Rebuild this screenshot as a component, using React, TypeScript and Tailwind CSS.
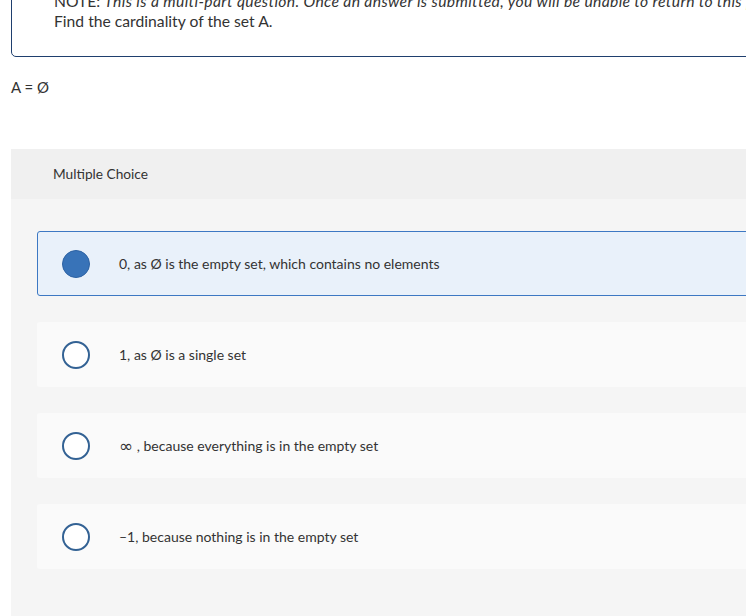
import React from 'react';

const options: { label: React.ReactNode; key: string; selected: boolean }[] = [
  { key: 'a', label: '0, as Ø is the empty set, which contains no elements', selected: true },
  { key: 'b', label: '1, as Ø is a single set', selected: false },
  {
    key: 'c',
    label: (
      <>
        <span className="text-[17px] leading-[14px] align-[-1px]" style={{ fontFamily: '"DejaVu Sans", sans-serif' }}>∞</span>
        {' , because everything is in the empty set'}
      </>
    ),
    selected: false,
  },
  { key: 'd', label: '–1, because nothing is in the empty set', selected: false },
];

const App: React.FC = () => {
  return (
    <div
      className="w-[746px] h-[616px] overflow-hidden bg-white text-[#333]"
      style={{ fontFamily: 'Lato, "Liberation Sans", sans-serif' }}
    >
      <div className="w-[820px]">
        {/* Question prompt box */}
        <div className="ml-[11px] -mt-[26px] border border-[#1f3f6e] rounded-[5px] pl-[42px] pt-[16px] pb-[25px] text-[15.7px] leading-[20px]">
          <p className="whitespace-nowrap">
            NOTE: <em className="tracking-[0.35px]">This is a multi-part question. Once an answer is submitted, you will be unable to return to this part.</em>
          </p>
          <p>Find the cardinality of the set A.</p>
        </div>

        <p className="ml-[11px] mt-[20px] text-[15px] leading-[20px]">A = Ø</p>

        {/* Multiple choice panel */}
        <div className="ml-[11px] mt-[52px] bg-[#f5f5f5] h-[500px]">
          <div className="h-[50px] bg-[#f0f0f0] flex items-center pl-[42px] text-[13.7px]">
            Multiple Choice
          </div>
          <div className="pl-[26px] pt-[32px] flex flex-col gap-[26px]">
            {options.map((o) => (
              <div
                key={o.key}
                className={
                  o.selected
                    ? 'h-[65px] flex items-center border border-[#3d78c3] rounded-l-[3px] bg-[#e9f1fa] pl-[24px]'
                    : 'h-[65px] flex items-center rounded-l-[3px] bg-[#fafafa] pl-[25px]'
                }
              >
                {o.selected ? (
                  <span className="w-[28px] h-[28px] rounded-full bg-[#3873b8] border border-[#2d62a3] shrink-0" />
                ) : (
                  <span className="w-[28px] h-[28px] rounded-full border-[2px] border-[#336294] bg-white shrink-0" />
                )}
                <span className="ml-[29px] text-[14px] leading-[20px] pt-[1px]">{o.label}</span>
              </div>
            ))}
          </div>
        </div>
      </div>
    </div>
  );
};

export default App;
